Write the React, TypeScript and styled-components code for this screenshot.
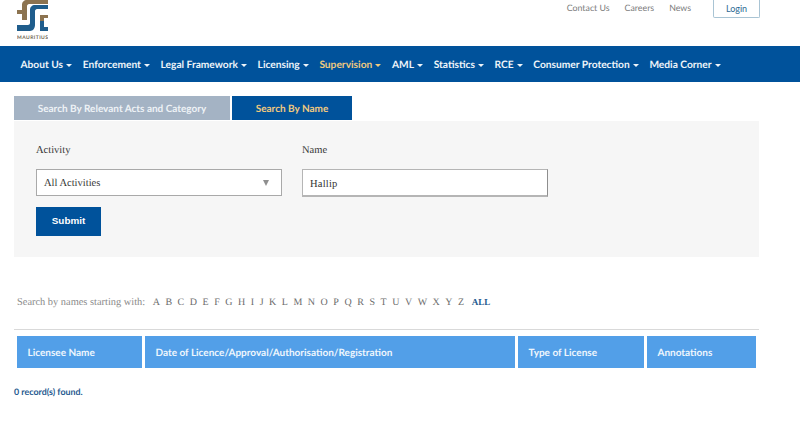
import React from 'react'
import styled, { createGlobalStyle } from 'styled-components'

const GlobalStyle = createGlobalStyle`
  html, body {
    margin: 0;
    padding: 0;
    background: #fff;
    font-family: Lato, "Liberation Sans", sans-serif;
    text-rendering: geometricPrecision;
  }
`

const Page = styled.div`
  width: 800px;
  height: 422px;
  overflow: hidden;
`

const Header = styled.header`
  height: 46px;
  display: flex;
  justify-content: space-between;
  align-items: flex-start;
  padding: 0 40px 0 17px;
`

const TopLinks = styled.div`
  display: flex;
  align-items: flex-start;
`

const TopLink = styled.a`
  font-size: 8.8px;
  line-height: 15px;
  color: #7b7b7b;
  margin-left: 15px;
`

const LoginButton = styled.button`
  box-sizing: border-box;
  width: 47px;
  height: 18px;
  margin: 0 0 0 22px;
  padding: 0;
  border: 1px solid #a9c4d4;
  border-top: none;
  border-radius: 0 0 2px 2px;
  background: #fff;
  color: #2d6a94;
  font: 9px Lato, sans-serif;
  line-height: 15px;
`

const Nav = styled.nav`
  box-sizing: border-box;
  height: 36px;
  background: #00529b;
  display: flex;
  align-items: center;
  gap: 10.7px;
  padding: 1px 0 0 20.5px;
`

const NavItem = styled.a<{ $active?: boolean }>`
  display: flex;
  align-items: center;
  font-size: 10.2px;
  font-weight: 700;
  white-space: nowrap;
  color: ${({ $active }) => ($active ? '#f0c97f' : '#eef4f9')};

  &::after {
    content: '';
    margin-left: 3px;
    margin-top: 2px;
    border-top: 3px solid ${({ $active }) => ($active ? '#f0c97f' : '#eef4f9')};
    border-left: 3px solid transparent;
    border-right: 3px solid transparent;
  }
`

const Content = styled.main`
  padding: 14px 0 0 14px;
  width: 745px;
`

const Tabs = styled.div`
  display: flex;
  gap: 2px;
  margin-bottom: 1px;
`

const Tab = styled.div<{ $active?: boolean; $width: number }>`
  box-sizing: border-box;
  width: ${({ $width }) => $width}px;
  height: 24px;
  padding-top: 1px;
  display: flex;
  align-items: center;
  justify-content: center;
  font-size: 10px;
  font-weight: 700;
  background: ${({ $active }) => ($active ? '#00529b' : '#a4b3c4')};
  color: ${({ $active }) => ($active ? '#f0c97f' : '#eef2f6')};
`

const Panel = styled.section`
  box-sizing: border-box;
  height: 136px;
  background: #f6f6f6;
  padding: 23px 22px 0;
`

const Fields = styled.div`
  display: flex;
  gap: 20px;
`

const Field = styled.div<{ $width: number }>`
  width: ${({ $width }) => $width}px;
`

const Label = styled.div`
  font: 10.5px/13px "Liberation Serif", serif;
  color: #333;
  margin-bottom: 12px;
`

const SelectBox = styled.div`
  box-sizing: border-box;
  height: 27px;
  border: 1px solid #a9a9a9;
  background: #fff;
  display: flex;
  align-items: center;
  justify-content: space-between;
  padding: 1px 12px 0 7px;
  font: 10.5px "Liberation Serif", serif;
  color: #333;

  &::after {
    content: '';
    border-top: 6px solid #8f8f8f;
    border-left: 3.5px solid transparent;
    border-right: 3.5px solid transparent;
  }
`

const TextInput = styled.input`
  box-sizing: border-box;
  display: block;
  width: 100%;
  height: 28px;
  border: 1px solid #b5b5b5;
  border-right-color: #8e8e8e;
  border-bottom-width: 2px;
  background: #fff;
  padding: 1px 7px 0;
  outline: none;
  font: 10.5px "Liberation Serif", serif;
  color: #333;
  letter-spacing: 0.2px;
`

const SubmitButton = styled.button`
  display: block;
  width: 65px;
  height: 29px;
  margin-top: 10px;
  padding: 0 0 2px;
  border: none;
  background: #00529b;
  color: #fff;
  font: 700 9.9px "Liberation Sans", sans-serif;
`

const LetterRow = styled.div`
  display: flex;
  align-items: center;
  height: 14px;
  margin-top: 37px;
  padding: 1px 0 0 3px;
  font-family: "Liberation Serif", serif;
`

const LetterCaption = styled.span`
  font-size: 10.4px;
  color: #8a8a8a;
  margin-right: 7.5px;
`

const Letter = styled.a`
  font-size: 10px;
  color: #6d6d6d;
  margin-right: 5.33px;
  letter-spacing: 0.2px;
`

const AllLink = styled.a`
  font-size: 9px;
  font-weight: 700;
  color: #1f5a8f;
  margin-left: 2px;
`

const Divider = styled.hr`
  height: 1px;
  margin: 20px 0 6px;
  border: none;
  background: #d9d9d9;
`

const TableHead = styled.div`
  display: grid;
  grid-template-columns: 125px 370px 126px 109px;
  gap: 3px;
  padding-left: 3px;
`

const HeadCell = styled.div`
  box-sizing: border-box;
  height: 32px;
  display: flex;
  align-items: center;
  padding: 1px 0 0 10.5px;
  background: #529fe8;
  color: #eef6fd;
  font-size: 10px;
  font-weight: 700;
`

const RecordCount = styled.div`
  margin-top: 17.5px;
  font-size: 8.9px;
  line-height: 12px;
  font-weight: 700;
  color: #1f5a8f;
`

const Logo = () => (
  <svg width="31" height="40" viewBox="0 0 31 40">
    <g fill="#8c7350">
      <path d="M5 10V5c0-3 2-5 5-5h21v4H12c-1 0-2 1-2 2v14H5v-6H0v-4z" />
      <path d="M23 15h8v3h-4v3h-4z" />
    </g>
    <g fill="#1f5d8c">
      <path d="M0 25h11c1 0 2-1 2-2V10c0-3 2-5 5-5h13v4H20c-1 0-2 1-2 2v14c0 3-2 6-5 6H0z" />
      <path d="M23 21h4v6h4v4h-8z" />
    </g>
    <text x="0" y="39" fontFamily="Lato, sans-serif" fontSize="5" fontWeight="700" fill="#6b5f4d" textLength="31">
      MAURITIUS
    </text>
  </svg>
)

const navItems = [
  { label: 'About Us' },
  { label: 'Enforcement' },
  { label: 'Legal Framework' },
  { label: 'Licensing' },
  { label: 'Supervision', active: true },
  { label: 'AML' },
  { label: 'Statistics' },
  { label: 'RCE' },
  { label: 'Consumer Protection' },
  { label: 'Media Corner' },
]

const letters = 'ABCDEFGHIJKLMNOPQRSTUVWXYZ'.split('')

const columns = [
  'Licensee Name',
  'Date of Licence/Approval/Authorisation/Registration',
  'Type of License',
  'Annotations',
]

const App = () => {
  return (
    <Page>
      <GlobalStyle />
      <Header>
        <Logo />
        <TopLinks>
          <TopLink>Contact Us</TopLink>
          <TopLink>Careers</TopLink>
          <TopLink>News</TopLink>
          <LoginButton>Login</LoginButton>
        </TopLinks>
      </Header>
      <Nav>
        {navItems.map((item) => (
          <NavItem key={item.label} $active={item.active}>
            {item.label}
          </NavItem>
        ))}
      </Nav>
      <Content>
        <Tabs>
          <Tab $width={216}>Search By Relevant Acts and Category</Tab>
          <Tab $width={120} $active>
            Search By Name
          </Tab>
        </Tabs>
        <Panel>
          <Fields>
            <Field $width={246}>
              <Label>Activity</Label>
              <SelectBox>All Activities</SelectBox>
            </Field>
            <Field $width={246}>
              <Label>Name</Label>
              <TextInput defaultValue="Hallip" />
            </Field>
          </Fields>
          <SubmitButton>Submit</SubmitButton>
        </Panel>
        <LetterRow>
          <LetterCaption>Search by names starting with:</LetterCaption>
          {letters.map((letter) => (
            <Letter key={letter}>{letter}</Letter>
          ))}
          <AllLink>ALL</AllLink>
        </LetterRow>
        <Divider />
        <TableHead>
          {columns.map((column) => (
            <HeadCell key={column}>{column}</HeadCell>
          ))}
        </TableHead>
        <RecordCount>0 record(s) found.</RecordCount>
      </Content>
    </Page>
  )
}

export default App
